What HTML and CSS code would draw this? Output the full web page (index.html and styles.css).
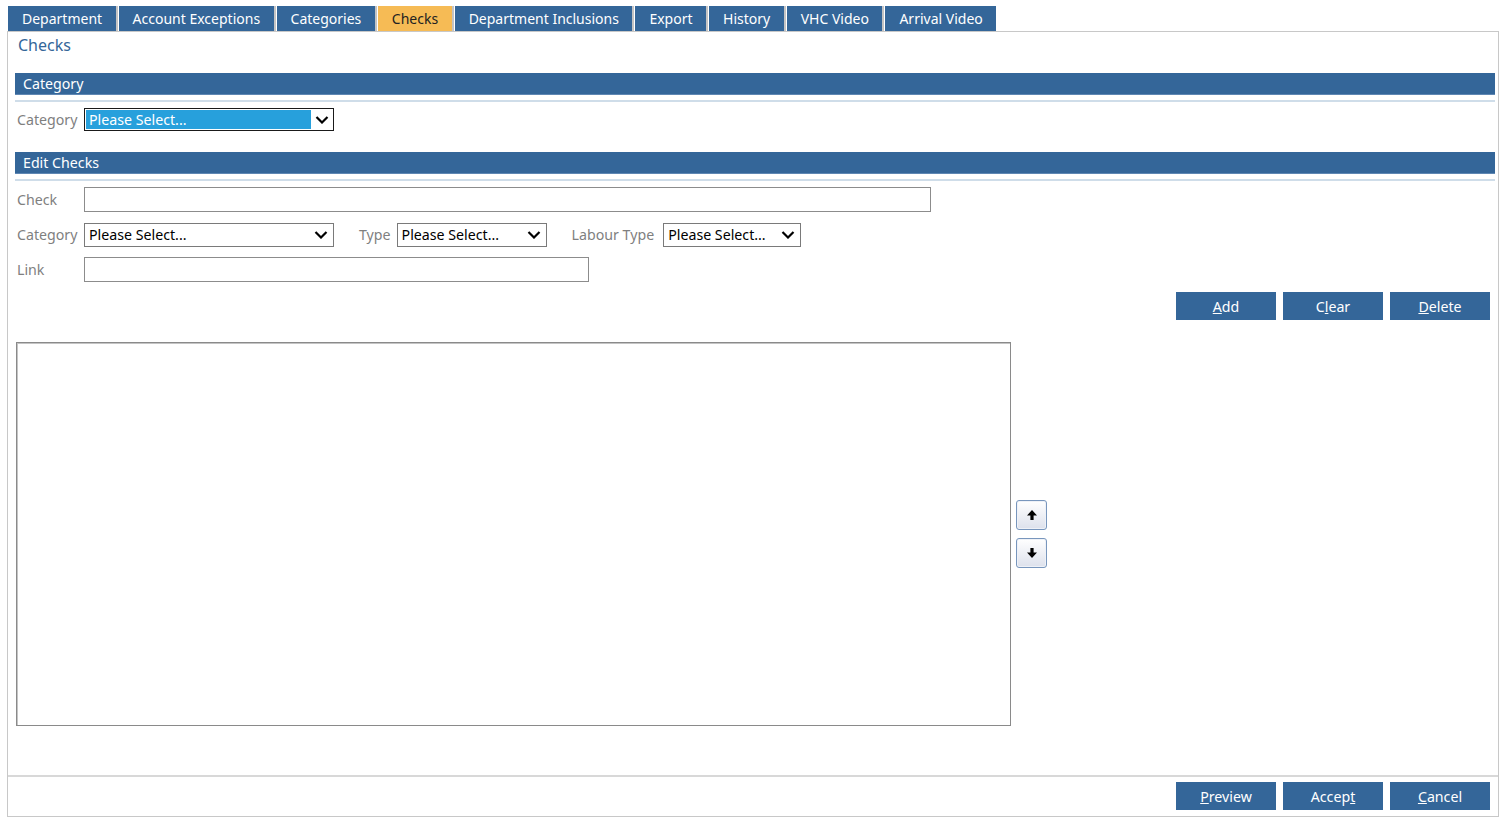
FILE: index.html
```html
<!DOCTYPE html>
<html lang="en">
<head>
  <meta charset="UTF-8">
  <title>Checks</title>
  <link rel="stylesheet" href="styles.css">
</head>
<body>
<div class="tabs">
  <a class="tab">Department</a>
  <a class="tab">Account Exceptions</a>
  <a class="tab">Categories</a>
  <a class="tab active">Checks</a>
  <a class="tab">Department Inclusions</a>
  <a class="tab">Export</a>
  <a class="tab">History</a>
  <a class="tab">VHC Video</a>
  <a class="tab last">Arrival Video</a>
</div>

<div class="panel">
  <div class="content">
    <div class="page-title">Checks</div>

    <div class="section">
      <div class="section-head">Category</div>
      <div class="section-rule"></div>
    </div>
    <div class="row row-first">
      <label class="label">Category</label>
      <div class="select select-focus w-250">
        <span class="select-text">Please Select...</span>
        <svg class="chev" width="14" height="8" viewBox="0 0 14 8"><path d="M1.5 1 L7 6.5 L12.5 1" fill="none" stroke="#000" stroke-width="2.2"/></svg>
      </div>
    </div>

    <div class="section section-edit">
      <div class="section-head">Edit Checks</div>
      <div class="section-rule"></div>
    </div>
    <div class="row row-check">
      <label class="label">Check</label>
      <div class="input w-848"></div>
    </div>
    <div class="row row-mid">
      <label class="label">Category</label>
      <div class="select w-250">
        <span class="select-text">Please Select...</span>
        <svg class="chev" width="14" height="8" viewBox="0 0 14 8"><path d="M1.5 1 L7 6.5 L12.5 1" fill="none" stroke="#000" stroke-width="2.2"/></svg>
      </div>
      <label class="label-inline type-label">Type</label>
      <div class="select w-150">
        <span class="select-text">Please Select...</span>
        <svg class="chev" width="14" height="8" viewBox="0 0 14 8"><path d="M1.5 1 L7 6.5 L12.5 1" fill="none" stroke="#000" stroke-width="2.2"/></svg>
      </div>
      <label class="label-inline labour-label">Labour Type</label>
      <div class="select w-138">
        <span class="select-text">Please Select...</span>
        <svg class="chev" width="14" height="8" viewBox="0 0 14 8"><path d="M1.5 1 L7 6.5 L12.5 1" fill="none" stroke="#000" stroke-width="2.2"/></svg>
      </div>
    </div>
    <div class="row row-link">
      <label class="label">Link</label>
      <div class="input w-506"></div>
    </div>

    <div class="actions">
      <button class="btn"><u>A</u>dd</button>
      <button class="btn">C<u>l</u>ear</button>
      <button class="btn"><u>D</u>elete</button>
    </div>

    <div class="list-area">
      <div class="listbox"></div>
      <div class="movers">
        <button class="mover" title="Move up">
          <svg width="12" height="12" viewBox="0 0 12 12"><path d="M6 1 L11 6.5 L7.6 6.5 L7.6 11 L4.4 11 L4.4 6.5 L1 6.5 Z" fill="#000"/></svg>
        </button>
        <button class="mover" title="Move down">
          <svg width="12" height="12" viewBox="0 0 12 12"><path d="M6 11 L11 5.5 L7.6 5.5 L7.6 1 L4.4 1 L4.4 5.5 L1 5.5 Z" fill="#000"/></svg>
        </button>
      </div>
    </div>
  </div>

  <div class="footer">
    <button class="btn"><u>P</u>review</button>
    <button class="btn">Accep<u>t</u></button>
    <button class="btn"><u>C</u>ancel</button>
  </div>
</div>
</body>
</html>
```

FILE: styles.css
```css
:root {
  --blue: #346699;
  --orange: #f6bb55;
  --label: #7f7f7f;
  --panel-border: #c8c8c8;
}

* {
  box-sizing: border-box;
}

body {
  margin: 0;
  padding: 6px 6px 0 7px;
  background: #fff;
  font-family: 'Noto Sans', 'Open Sans', sans-serif;
  font-size: 14.2px;
  line-height: 1.25;
  color: #000;
}

.tabs {
  display: flex;
  height: 25px;
  padding-left: 1px;
}

.tab {
  display: block;
  height: 25px;
  line-height: 25px;
  padding: 0 13.5px 0 14px;
  background: var(--blue);
  color: #fff;
  font-size: 14px;
  border-right: 2px solid #c4c4c4;
  margin-right: 1px;
  white-space: nowrap;
}

.tab.last {
  border-right: none;
}

.tab.active {
  background: var(--orange);
  color: #222;
}

.panel {
  display: flex;
  flex-direction: column;
  height: 786px;
  border: 1px solid var(--panel-border);
}

.content {
  flex: 1;
  padding: 0 3px 0 7px;
}

.page-title {
  color: var(--blue);
  font-size: 16px;
  line-height: 24px;
  padding: 1px 0 0 3px;
}

.section {
  margin-top: 16px;
}

.section-edit {
  margin-top: 21px;
}

.section-head {
  height: 22px;
  line-height: 21px;
  padding-left: 8px;
  background: var(--blue);
  border-bottom: 1px solid #5f87b3;
  color: #fff;
}

.section-rule {
  margin-top: 5px;
  height: 2px;
  background: #cfdde9;
}

.row {
  display: flex;
  align-items: center;
}

.row-first {
  margin-top: 6px;
}

.row-check {
  margin-top: 6px;
}

.row-mid {
  margin-top: 11px;
}

.row-link {
  margin-top: 10px;
}

.label {
  width: 69px;
  padding-left: 2px;
  color: var(--label);
}

.label-inline {
  color: var(--label);
}

.type-label {
  margin: 0 6px 0 25px;
}

.labour-label {
  margin: 0 9px 0 25px;
}

.input {
  height: 25px;
  border: 1px solid #8c8c8c;
  background: #fff;
}

.select {
  display: flex;
  align-items: center;
  height: 24px;
  border: 1px solid #7a7a7a;
  background: #fff;
  padding: 0 5px 0 4px;
}

.select-text {
  flex: 1;
  white-space: nowrap;
  overflow: hidden;
}

.chev {
  flex: none;
  margin-left: 4px;
}

.select-focus {
  height: 23px;
  border-color: #1a1a1a;
  padding: 1px 4px 1px 1px;
}

.select-focus .select-text {
  align-self: stretch;
  background: #27a0dc;
  color: #fff;
  padding-left: 3px;
  line-height: 19px;
}

.w-250 { width: 250px; }
.w-150 { width: 150px; }
.w-138 { width: 138px; }
.w-848 { width: 847px; }
.w-506 { width: 505px; }

.actions {
  display: flex;
  justify-content: flex-end;
  gap: 7px;
  margin: 10px 5px 0 0;
}

.btn {
  width: 100px;
  height: 28px;
  padding: 0;
  border: none;
  background: var(--blue);
  color: #fff;
  font-family: inherit;
  font-size: 14.2px;
  cursor: pointer;
}

.list-area {
  display: flex;
  align-items: center;
  margin-top: 22px;
}

.listbox {
  width: 995px;
  height: 384px;
  margin-left: 1px;
  border: 1px solid #8a8a8a;
  box-shadow: inset 1px 1px 0 #c4c4c4;
}

.movers {
  display: flex;
  flex-direction: column;
  gap: 8px;
  margin-left: 5px;
}

.mover {
  display: flex;
  align-items: center;
  justify-content: center;
  width: 31px;
  height: 30px;
  padding: 0;
  border: 1px solid #7896bd;
  border-radius: 3px;
  background: linear-gradient(#ffffff, #dde1ec);
  box-shadow: inset 0 0 0 1px #eef1f7;
}

.footer {
  display: flex;
  justify-content: flex-end;
  gap: 7px;
  padding: 5px 8px 6px 0;
  border-top: 2px solid #d8d8d8;
}
```
